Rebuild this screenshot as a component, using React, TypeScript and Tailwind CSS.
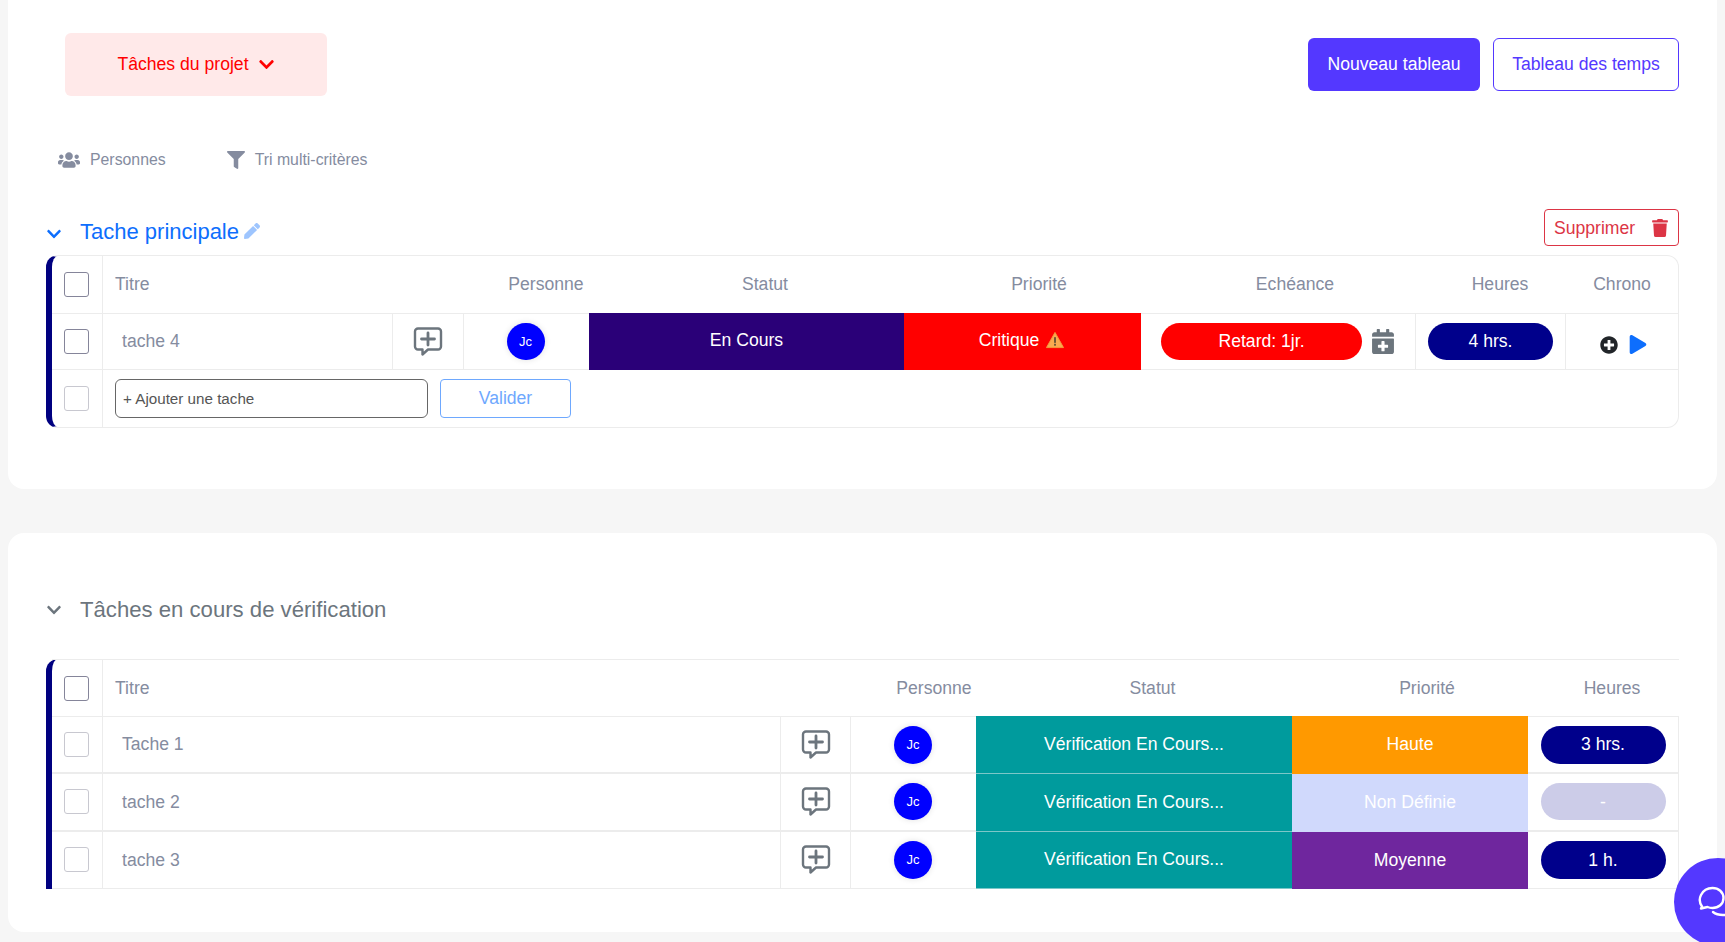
import React from "react";
import { FaChevronDown, FaUsers, FaFilter, FaPen, FaTrash, FaCalendarPlus, FaPlusCircle, FaPlay } from "react-icons/fa";

function Check({ faint }: { faint?: boolean }) {
  return (
    <div className="w-[51px] shrink-0 self-stretch flex items-center justify-center pr-[2px] border-r border-[#ececec]">
      <div className={`w-[25px] h-[25px] rounded-[3px] border bg-white ${faint ? "border-[#c8c8d0]" : "border-[#85859a]"}`} />
    </div>
  );
}

function CommentPlus() {
  return (
    <svg width="30" height="31" viewBox="0 0 30 31" fill="none" stroke="#6c757d" strokeWidth="2.4" strokeLinejoin="round" strokeLinecap="round">
      <path d="M5 2.5h20a3 3 0 0 1 3 3v15a3 3 0 0 1-3 3H15l-5.5 5v-5H5a3 3 0 0 1-3-3v-15a3 3 0 0 1 3-3z" />
      <path d="M15 7v12M8.5 13h13" strokeWidth="2.8" />
    </svg>
  );
}

function Warn() {
  return (
    <svg width="18" height="18" viewBox="0 0 19 18">
      <path d="M9.5 1L18.5 17H.5z" fill="#f9a94f" stroke="#f39a3c" strokeLinejoin="round" />
      <rect x="8.6" y="6" width="1.8" height="6" fill="#5b4a32" />
      <rect x="8.6" y="13" width="1.8" height="2" fill="#5b4a32" />
    </svg>
  );
}

function Avatar({ short }: { short?: boolean }) {
  return (
    <div className={`w-[38px] ${short ? "h-[37px]" : "h-[38px]"} rounded-full bg-[#0000ff] shadow-[0_0_6px_rgba(0,0,0,0.12)] text-white text-[13px] flex items-center justify-center`}>
      Jc
    </div>
  );
}

function Pill({ children, light, wide, short }: { children: React.ReactNode; light?: boolean; wide?: boolean; short?: boolean }) {
  return (
    <div className={`${short ? "h-[37px]" : "h-[38px]"} rounded-full flex items-center justify-center text-white text-[17.6px] ${wide ? "w-[201px] bg-[#ff0000]" : light ? "w-[125px] bg-[#cccce8]" : "w-[125px] bg-[#00008b]"}`}>
      {children}
    </div>
  );
}

function Tall({ width, color, children }: { width: string; color: string; children: React.ReactNode }) {
  return (
    <div className={`${width} ${color} shrink-0 self-stretch -mt-px -mb-px pb-[3px] flex items-center justify-center gap-[7px] text-white text-[17.6px]`}>
      {children}
    </div>
  );
}

function Verif({ name, prio, prioColor, hours, light, thick, first }: { name: string; prio: string; prioColor: string; hours: string; light?: boolean; thick?: boolean; first?: boolean }) {
  return (
    <div className={`flex h-[57.33px] border-r border-[#ececec] ${thick ? "border-b-2" : "border-b"} border-b-[#ececec]`}>
      <Check faint />
      <div className="flex-1 pl-[19px] flex items-center text-[#858c9f] text-[17.6px] border-r border-[#ececec]">{name}</div>
      <div className="w-[70px] shrink-0 flex items-center justify-center border-r border-[#ececec]"><CommentPlus /></div>
      <div className="w-[125px] shrink-0 flex items-center justify-center pr-px"><Avatar short={light} /></div>
      <div className={`w-[316px] shrink-0 flex items-center justify-center bg-[#009b9d] text-white text-[17.6px] ${first ? "-mt-px" : ""} ${thick ? "-mb-[2px]" : "-mb-px"} pb-px border-b border-[#7cc7c8]`}>Vérification En Cours...</div>
      <div className={`w-[236px] shrink-0 flex items-center justify-center text-white text-[17.6px] ${first ? "-mt-px" : ""} ${thick ? "-mb-[2px]" : "-mb-px"} pb-px ${prioColor}`}>{prio}</div>
      <div className="w-[150px] shrink-0 flex items-center justify-center"><Pill light={light} short={light}>{hours}</Pill></div>
    </div>
  );
}

export default function App() {
  return (
    <div className="relative h-[942px] overflow-hidden bg-[#f6f6f6] px-2 font-['Liberation_Sans',Arial,sans-serif] text-[17.6px]">
      <section className="h-[489px] bg-white rounded-b-2xl px-[38px] pt-[33px]">
        <div className="flex items-center justify-between h-[63px]">
          <button className="ml-[19px] w-[262px] h-[63px] rounded-md bg-[#ffe9e9] text-[#ff0000] flex items-center justify-center gap-[9px]">
            Tâches du projet <FaChevronDown className="w-[17px] h-[17px]" />
          </button>
          <div className="flex gap-[13px] -mt-[1px]">
            <button className="w-[172px] h-[53px] rounded-md bg-[#5438ff] text-white">Nouveau tableau</button>
            <button className="w-[186px] h-[53px] rounded-md border border-[#5438ff] text-[#5438ff] bg-white">Tableau des temps</button>
          </div>
        </div>

        <div className="flex items-center h-6 mt-[52px] ml-3 text-[15.84px] text-[#858c9f]">
          <FaUsers className="w-[22px] h-[22px]" />
          <span className="ml-[10px]">Personnes</span>
          <FaFilter className="ml-[61px] w-[18px] h-[18px]" />
          <span className="ml-[10px]">Tri multi-critères</span>
        </div>

        <div className="flex items-end justify-between h-[37px] mt-[37px] mb-[9px]">
          <div className="flex items-center text-[#0d6efd] text-[22px] leading-[30px] -mb-[1px]">
            <FaChevronDown className="w-[16px] h-[16px] mt-[3px]" />
            <span className="ml-[18px]">Tache principale</span>
            <FaPen className="ml-[5px] -mt-[3px] w-[16px] h-[16px] text-[#9ec5fe]" />
          </div>
          <button className="w-[135px] h-[37px] rounded-[4px] border border-[#dc3545] text-[#dc3545] flex items-center pl-[9px] pt-px">
            Supprimer <FaTrash className="ml-[17px] -mt-px w-[16px] h-[18px]" />
          </button>
        </div>

        <div className="rounded-xl border border-[#ececec] border-l-[6px] border-l-[#000080]">
          <div className="flex h-[58px] border-b border-[#ececec] text-[#858c9f] items-center">
            <Check />
            <div className="w-[387px] shrink-0 pl-3">Titre</div>
            <div className="w-[112px] shrink-0 text-center">Personne</div>
            <div className="w-[326px] shrink-0 text-center">Statut</div>
            <div className="w-[222px] shrink-0 text-center">Priorité</div>
            <div className="w-[290px] shrink-0 text-center">Echéance</div>
            <div className="w-[122px] shrink-0 text-center pr-[2px]">Heures</div>
            <div className="flex-1 pl-[4px] text-center">Chrono</div>
          </div>
          <div className="flex h-[56px] border-b border-[#ececec] items-center">
            <Check />
            <div className="w-[290px] shrink-0 self-stretch pl-[19px] flex items-center text-[#858c9f] border-r border-[#ececec]">tache 4</div>
            <div className="w-[71px] shrink-0 self-stretch flex items-center justify-center border-r border-[#ececec]"><CommentPlus /></div>
            <div className="w-[125px] shrink-0 flex items-center justify-center pr-[2px]"><Avatar short /></div>
            <Tall width="w-[315px]" color="bg-[#2a0078]">En Cours</Tall>
            <Tall width="w-[237px] pr-[2px]" color="bg-[#ff0000]">Critique <Warn /></Tall>
            <div className="w-[275px] shrink-0 self-stretch flex items-center pl-[20px] border-r border-[#ececec]">
              <Pill wide short>Retard: 1jr.</Pill>
              <FaCalendarPlus className="ml-[10px] w-[22px] h-[25px] text-[#6c757d]" />
            </div>
            <div className="w-[150px] shrink-0 self-stretch flex items-center justify-center border-r border-[#ececec]"><Pill short>4 hrs.</Pill></div>
            <div className="flex-1 flex items-center justify-center gap-[11px] mt-[6px] pl-[3px]">
              <FaPlusCircle className="w-[18px] h-[18px] text-[#212529]" />
              <FaPlay className="w-[18px] h-[19px] text-[#0d6efd]" />
            </div>
          </div>
          <div className="flex h-[57px] items-center">
            <Check faint />
            <input readOnly placeholder="+ Ajouter une tache" className="ml-3 w-[313px] h-[39px] rounded-md border border-[#666] px-[7px] text-[15.2px] placeholder:text-[#555]" />
            <button className="ml-3 w-[131px] h-[39px] rounded-[4px] border border-[#6ea8fe] text-[#6ea8fe]">Valider</button>
          </div>
        </div>
      </section>

      <section className="mt-[44px] h-[399px] bg-white rounded-2xl px-[38px]">
        <div className="flex items-center h-[30px] pt-[62px] box-content text-[#6c757d] text-[22.15px]">
          <FaChevronDown className="w-[16px] h-[16px]" />
          <span className="ml-[18px]">Tâches en cours de vérification</span>
        </div>
        <div className="mt-[34px] rounded-tl-xl border-l-[6px] border-l-[#000080]">
          <div className="flex h-[58px] border-y border-[#ececec] text-[#858c9f] items-center">
            <Check />
            <div className="flex-1 pl-3">Titre</div>
            <div className="w-[122px] shrink-0 text-center">Personne</div>
            <div className="w-[314px] shrink-0 text-center pl-px">Statut</div>
            <div className="w-[236px] shrink-0 text-center">Priorité</div>
            <div className="w-[134px] shrink-0 text-center">Heures</div>
          </div>
          <Verif name="Tache 1" prio="Haute" prioColor="bg-[#ff9900]" hours="3 hrs." thick first />
          <Verif name="tache 2" prio="Non Définie" prioColor="bg-[#d0d9fc]" hours="-" light thick />
          <Verif name="tache 3" prio="Moyenne" prioColor="bg-[#6f269e]" hours="1 h." />
        </div>
      </section>

      <div className="absolute left-[1674px] top-[858px] w-[88px] h-[88px] rounded-full bg-[#5438ff] flex items-center pl-[24px] pt-[2px]">
        <svg width="40" height="34" viewBox="0 0 40 34" fill="none" stroke="white" strokeWidth="2.4" strokeLinecap="round" strokeLinejoin="round" className="shrink-0 -mt-[2px]">
          <path d="M4 21.5C1.5 18 1 14 3 10 5.5 5 10 3 14.5 3 20.5 3 25.5 7 25.5 13S20.5 23 14.5 23c-2 0-3.5-.3-5-1l-6.5 1.5z" />
          <path d="M15 27c2.5 2 6 3 10 3 5 0 9-1 12-4" />
        </svg>
      </div>
    </div>
  );
}
